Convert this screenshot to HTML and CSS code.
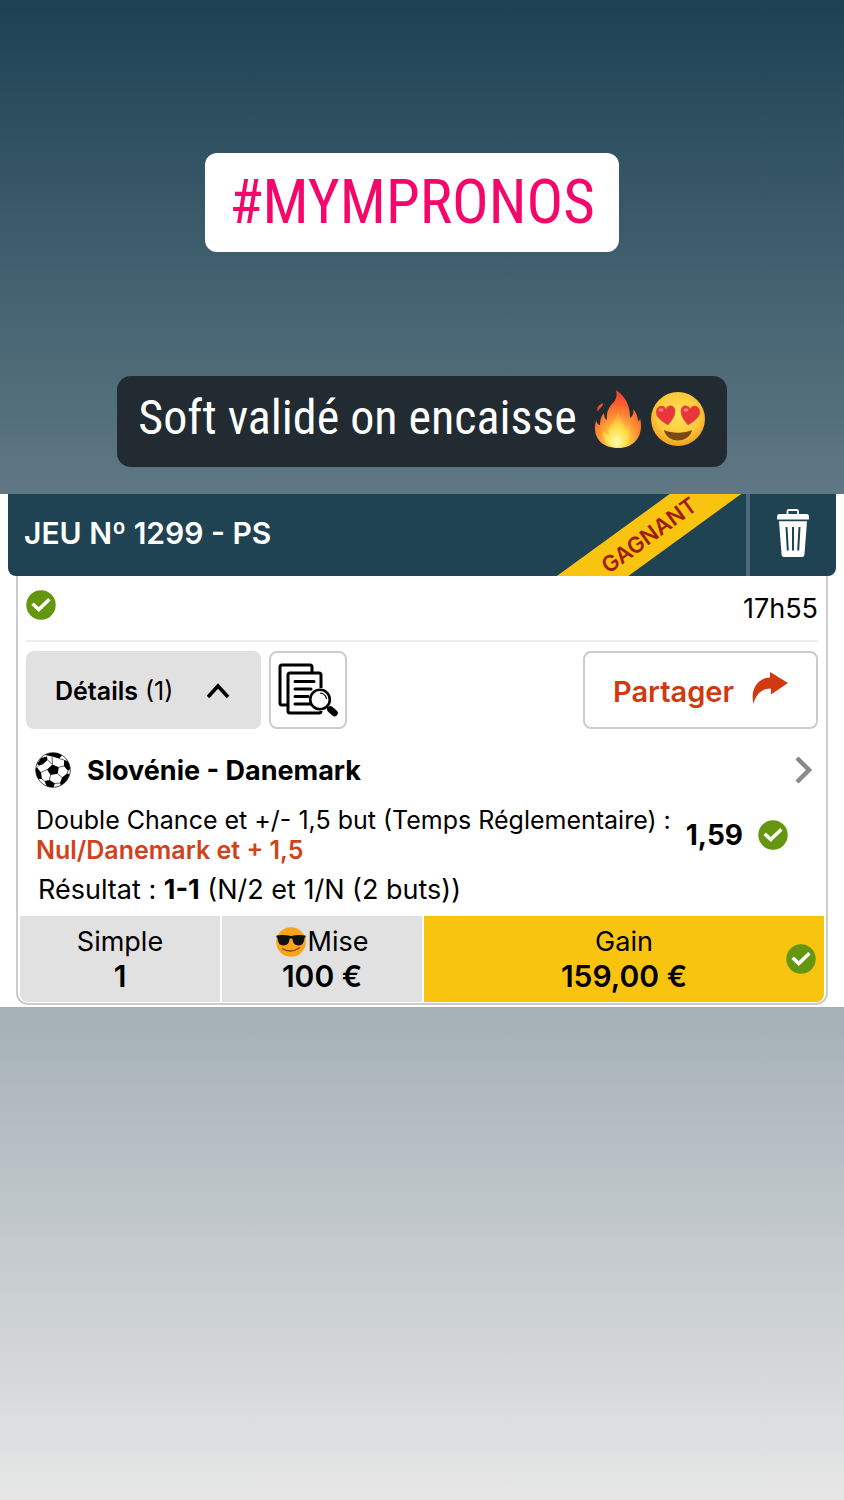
FILE: index.html
```html
<!DOCTYPE html>
<html lang="fr">
<head>
<meta charset="utf-8">
<meta name="viewport" content="width=device-width, initial-scale=1">
<title>#MYMPRONOS</title>
<link rel="stylesheet" href="styles.css">
</head>
<body>
<svg class="defs" width="0" height="0" aria-hidden="true">
  <symbol id="check" viewBox="0 0 30 30">
    <circle cx="15" cy="15" r="14.7" fill="#64960f"/>
    <path d="M6.600 13.800 L12.800 19.600 L23.400 9.200" fill="none" stroke="#fff" stroke-width="3.600"/>
  </symbol>
</svg>
<header class="intro">
  <h1 class="hashtag">#MYMPRONOS</h1>
  <p class="caption">
    <span>Soft validé on encaisse</span>
    <svg class="fire" viewBox="0 0 48 60" role="img" aria-label="feu">
      <defs>
        <radialGradient id="flame" cx=".5" cy=".88" r=".82">
          <stop offset="0" stop-color="#fff27a"/><stop offset=".22" stop-color="#ffd84a"/>
          <stop offset=".48" stop-color="#ff9a35"/><stop offset=".78" stop-color="#f9602f"/><stop offset="1" stop-color="#ea4a30"/>
        </radialGradient>
        <radialGradient id="core" cx=".5" cy=".85" r=".75">
          <stop offset="0" stop-color="#fffbb0"/><stop offset=".5" stop-color="#ffe04d"/><stop offset="1" stop-color="#ffb83a" stop-opacity=".5"/>
        </radialGradient>
      </defs>
      <path d="M22 1 C34 9 36 20 36 29 C39 27 40 24 39 20 C43 24 44 29 44 32 C45 32 46 31 46 29 C50 43 43 59 24 59 C8 59 0 49 1 37 C1 35 2 33 2 31 C3 35 5 36 6 36 C6 31 7 27 10 24 C10 28 11 30 13 31 C12 22 16 17 19 14 C23 10 23 5 22 1Z" fill="url(#flame)"/>
      <path d="M9 14 C9 19 5 18 4 23 C2 18 5 16 9 14Z" fill="#f0522f"/>
      <path d="M24 23 C25 31 31 33 31 41 C33 40 34 38 34 36 C38 45 36 57 24 58 C12 58 7 49 10 41 C11 45 13 46 15 46 C13 37 22 33 24 23Z" fill="url(#core)"/>
    </svg>
    <svg class="love" viewBox="0 0 56 56" role="img" aria-label="yeux en cœur">
      <defs>
        <radialGradient id="face" cx=".5" cy=".42" r=".6">
          <stop offset="0" stop-color="#ffe05b"/><stop offset=".65" stop-color="#ffca3c"/><stop offset="1" stop-color="#f09c1e"/>
        </radialGradient>
      </defs>
      <circle cx="28" cy="28" r="27" fill="url(#face)"/>
      <path d="M14 39 C22 42.500 34 42.500 42 39 C41 45 35 49.500 28 49.500 C21 49.500 15 45 14 39Z" fill="#7b4a12"/>
      <path d="M18 34 C10 29 5 25 6.500 19 C8 14 14 14 16 18 C18 13 25 14 25 20 C25 26 21 30 18 34Z" fill="#e9353c" stroke="#c9622a" stroke-width=".7"/>
      <path d="M38 34 C46 29 51 25 49.500 19 C48 14 42 14 40 18 C38 13 31 14 31 20 C31 26 35 30 38 34Z" fill="#e9353c" stroke="#c9622a" stroke-width=".7"/>
      <ellipse cx="11" cy="19" rx="2.500" ry="1.800" fill="#ff7b7b"/><ellipse cx="36" cy="19" rx="2.500" ry="1.800" fill="#ff7b7b"/>
    </svg>
  </p>
</header>

<main class="ticket">
  <div class="bar">
    <div class="bar-main">
      <h2>JEU Nº 1299 - PS</h2>
      <span class="ribbon">GAGNANT</span>
    </div>
    <button class="trash" type="button" aria-label="Supprimer">
      <svg viewBox="0 0 32 48" aria-hidden="true">
        <path d="M10.500 6 V2.500 Q10.500 1 12 1 H19.500 Q21 1 21 2.500 V6" fill="none" stroke="#fff" stroke-width="1.800"/>
        <path d="M2.500 5 H29.500 Q32 5 32 8 V10.500 H0 V8 Q0 5 2.500 5Z" fill="#fff"/>
        <path d="M2 12.200 H30 L27.500 45 Q27.300 48 25 48 H7 Q4.700 48 4.500 45Z" fill="#fff"/>
        <path d="M9.500 18 L10.800 41.500 M16 18 V41.500 M22.500 18 L21.200 41.500" stroke="#1f4352" stroke-width="2" fill="none"/>
      </svg>
    </button>
  </div>

  <div class="body">
    <div class="content">
      <div class="status">
        <svg class="check" role="img" aria-label="Gagné"><use href="#check"/></svg>
        <time>17h55</time>
      </div>
      <div class="actions">
        <button class="details" type="button" aria-expanded="true">
          <span><strong>Détails</strong> (1)</span>
          <svg viewBox="0 0 24 16" aria-hidden="true"><path d="M2 14 L12 3 L22 14" fill="none" stroke="#000" stroke-width="3.600"/></svg>
        </button>
        <button class="docs" type="button" aria-label="Voir le détail">
          <svg viewBox="0 0 60 54" fill="none" stroke="#000" stroke-width="3" aria-hidden="true">
            <path d="M9 42 H4 Q2 42 2 40 V4 Q2 2 4 2 H32 Q34 2 34 4 V9" />
            <path d="M43 25 V12 Q43 10 41 10 H12 Q10 10 10 12 V48 Q10 50 12 50 H41 Q43 50 43 48"/>
            <path d="M17 18.500 H36 M17 26 H33 M17 33.500 H30 M17 41 H32" stroke-linecap="round"/>
            <circle cx="42" cy="36.500" r="9.800" fill="#fff" stroke-width="2.600"/>
            <path d="M42 30 Q47.500 30.500 48.500 36" stroke-width="1.200"/>
            <path d="M49 44 L52 47" stroke-width="2"/>
            <path d="M52.500 46.500 L56.500 50" stroke-width="6.500" stroke-linecap="round"/>
          </svg>
        </button>
        <button class="share" type="button">
          <span>Partager</span>
          <svg viewBox="0 0 36 32" aria-hidden="true"><path d="M18 0 L36 11 L19 22.500 V16.500 C10 16.500 4 22 1.500 32 C-2 18 5 6 18 5.500Z" fill="#d1390f"/></svg>
        </button>
      </div>
      <a class="match" href="#match">
        <svg class="ball" viewBox="0 0 36 36" aria-hidden="true">
          <clipPath id="ballclip"><circle cx="18" cy="18" r="17.200"/></clipPath>
          <circle cx="18" cy="18" r="17.300" fill="#fff" stroke="#222" stroke-width=".8"/>
          <g clip-path="url(#ballclip)">
            <path d="M17.500 12.500 L23.800 15.200 L22.800 21.800 L15.500 23 L12 17.500Z M10 3 L14 1 L23 0 L27 3.500 L24 6.500 L17 4.500Z M2 12 L6 6 L12 4.500 L12.500 8 L7.500 12.500 L4 13.500Z M29 8 L33 9 L36 16 L33 19 L29 14Z M0 16 L2 15.500 L6 20.500 L7 27 L3 27 L0 22Z M9.500 29 L14.500 28 L20 31.500 L18 36 L12 35Z M27 25.500 L32 21.500 L35 22 L32 29 L26 34 L25 31Z" fill="#000"/>
            <path d="M17.500 12.500 L17 4.500 M23.800 15.200 L29 14 M22.800 21.800 L27 25.500 M15.500 23 L14.500 28 M12 17.500 L6 20.500 M12.500 8 L17.500 12.500 M24 6.500 L29 8 M7 27 L9.500 29 M20 31.500 L25 31 M4 13.500 L2 15.500 M33 19 L32 21.500" stroke="#333" stroke-width=".8" fill="none"/>
          </g>
        </svg>
        <strong>Slovénie - Danemark</strong>
        <svg class="next" viewBox="0 0 17 28" aria-hidden="true"><path d="M2 2 L14 14 L2 26" fill="none" stroke="#8a8a8a" stroke-width="4.500"/></svg>
      </a>
      <div class="bet">
        <p>Double Chance et +/- 1,5 but (Temps Réglementaire) :<br><strong>Nul/Danemark et + 1,5</strong></p>
        <strong class="odds">1,59</strong>
        <svg class="check" role="img" aria-label="Gagné"><use href="#check"/></svg>
      </div>
      <p class="result">Résultat : <strong>1-1</strong> (N/2 et 1/N (2 buts))</p>
    </div>
    <dl class="totals">
      <div><dt>Simple</dt><dd>1</dd></div>
      <div>
        <dt><svg class="cool" viewBox="0 0 30 30" aria-hidden="true">
          <circle cx="15" cy="15" r="14.800" fill="#f9a51a"/>
          <path d="M.5 8.500 Q8 7.500 15 9 Q22 7.500 29.500 8.500 V10.500 L28.500 11 Q28 18.500 22.500 18.500 Q17 18.500 16.300 11.500 H13.700 Q13 18.500 7.500 18.500 Q2 18.500 1.500 11 L.5 10.500Z" fill="#111"/>
          <path d="M6 21.500 Q15 27 24 20.500" fill="none" stroke="#7a4a12" stroke-width="1.300"/>
        </svg>Mise</dt>
        <dd>100 €</dd>
      </div>
      <div class="gain"><dt>Gain</dt><dd>159,00 €</dd><svg class="check" role="img" aria-label="Gagné"><use href="#check"/></svg></div>
    </dl>
  </div>
</main>
</body>
</html>
```
FILE: styles.css
```css
* { box-sizing: border-box; }

body {
  margin: 0;
  min-height: 100vh;
  background: linear-gradient(#1d4254, #e6e6e6);
  color: #000;
  font-family: Inter, sans-serif;
  font-size: 27px;
}

h1, h2, p, dl, dd { margin: 0; }
svg { display: block; flex: none; }
.defs { position: absolute; }
button { font: inherit; color: inherit; cursor: pointer; padding: 0; border: 0; }

.intro {
  display: flex;
  flex-direction: column;
  align-items: center;
  gap: 124px;
  padding: 153px 0 27px;
  font-family: "Roboto Condensed", "Liberation Sans Narrow", "Liberation Sans", sans-serif;
}
.hashtag {
  padding: 0 24px;
  margin-right: 20px;
  border-radius: 12px;
  background: #fff;
  color: #f5066b;
  font-size: 61px;
  font-weight: 400;
  line-height: 99px;
}
.caption {
  display: flex;
  align-items: center;
  padding: 0 21px;
  border-radius: 14px;
  background: #212b31;
  color: #fff;
  font-size: 48px;
  line-height: 91px;
}
.caption span { line-height: 83px; padding-bottom: 8px; }
.caption svg { margin-bottom: 6px; }
.fire { width: 48px; height: 60px; margin-left: 17px; }
.love { width: 56px; height: 56px; margin-left: 8px; }

.ticket { padding: 0 8px 2px; background: #fff; }

.bar {
  display: flex;
  height: 82px;
  overflow: hidden;
  border-radius: 0 0 8px 8px;
  background: #1f4352;
  color: #fff;
}
.bar-main {
  position: relative;
  flex: 1;
  display: flex;
  align-items: center;
  padding: 0 0 4px 16px;
  overflow: hidden;
}
.bar h2 { font-size: 30px; font-weight: 600; }
.ribbon {
  position: absolute;
  right: -3px;
  top: 20px;
  width: 200px;
  background: #f8c410;
  color: #a01c08;
  font-size: 22px;
  font-weight: 600;
  line-height: 42px;
  text-align: center;
  transform: rotate(-36deg);
}
.trash {
  display: grid;
  place-items: center;
  width: 90px;
  padding-bottom: 4px;
  border-left: 4px solid #4d6c7b;
  background: none;
}
.trash svg { width: 32px; height: 48px; }

.body {
  margin: 0 8px;
  padding: 0 2px 1px;
  border: 2px solid #ccc;
  border-top: 0;
  border-radius: 0 0 12px 12px;
}
.content { padding: 0 6px; }
.check { width: 30px; height: 30px; }

.status {
  display: flex;
  justify-content: space-between;
  align-items: center;
  height: 66px;
  padding-bottom: 6px;
  border-bottom: 2px solid #ececec;
}
.status time { padding-top: 6px; }

.actions { display: flex; gap: 8px; padding-top: 9px; }
.actions button { height: 78px; border-radius: 8px; }
.details, .share { display: flex; align-items: center; justify-content: space-between; width: 235px; }
.details { padding: 2px 31px 0 29px; background: #e1e1e1; font-size: 25px; }
.details strong { font-weight: 600; }
.details svg { width: 24px; height: 16px; }
.actions .docs { width: 78px; display: grid; place-items: center; border: 2px solid #ccc; background: #fff; }
.docs svg { width: 60px; height: 54px; }
.actions .share {
  margin-left: auto;
  padding: 0 28px;
  border: 2px solid #ccc;
  background: #fff;
  color: #d1390f;
  font-size: 29px;
  font-weight: 600;
}
.share span { padding-top: 2px; }
.share svg { width: 36px; height: 32px; margin-bottom: 4px; }

.match {
  display: flex;
  align-items: center;
  height: 76px;
  padding: 6px 6px 0 9px;
  color: inherit;
  text-decoration: none;
}
.match strong { flex: 1; margin-left: 16px; }
.ball { width: 36px; height: 36px; }
.next { width: 17px; height: 28px; }

.bet { display: flex; align-items: center; padding: 0 30px 0 10px; line-height: 30px; }
.bet p { flex: 1; white-space: nowrap; font-size: 25px; }
.bet p strong { color: #d1421b; font-weight: 600; }
.bet .odds { margin-right: 15px; font-size: 28px; }
.result { padding: 7px 12px 8px; line-height: 36px; }

.totals { display: grid; grid-template-columns: 1fr 1fr 2fr; gap: 2px; text-align: center; line-height: 35px; }
.totals > div { padding: 8px 0; background: #e1e1e1; }
.totals > div:first-child { border-bottom-left-radius: 8px; }
.totals dt { display: flex; justify-content: center; align-items: center; }
.totals dd { font-size: 30px; font-weight: 600; }
.totals > .gain { position: relative; background: #f8c410; border-bottom-right-radius: 8px; }
.gain .check { position: absolute; right: 8px; top: 28px; }
.cool { width: 30px; height: 30px; margin-right: 2px; }
```
